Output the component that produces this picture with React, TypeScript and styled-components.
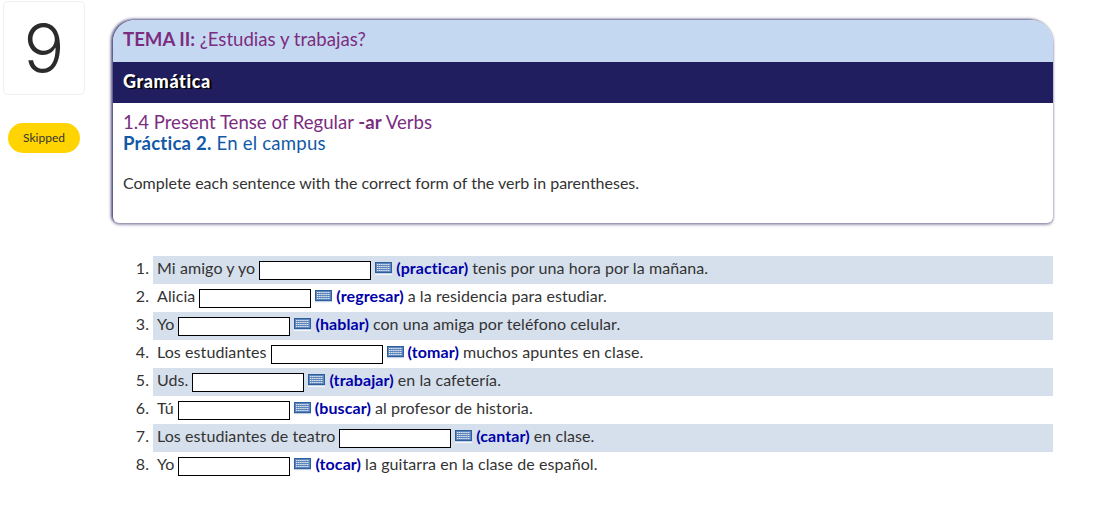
import styled, { createGlobalStyle } from "styled-components";

const GlobalStyle = createGlobalStyle`
  html, body {
    margin: 0;
    padding: 0;
    background: #fff;
    font-family: "Lato", "Open Sans", sans-serif;
    font-variant-ligatures: none;
    color: #333;
  }
`;

const Page = styled.div`
  display: flex;
  align-items: flex-start;
  width: 1119px;
  height: 511px;
  overflow: hidden;
`;

const Side = styled.div`
  width: 82px;
  margin: 1px 0 0 3px;
  display: flex;
  flex-direction: column;
  align-items: center;
`;

const NumberBox = styled.div`
  box-sizing: border-box;
  width: 82px;
  height: 94px;
  padding-bottom: 1px;
  border: 1px solid #efefef;
  border-radius: 5px;
  display: flex;
  align-items: center;
  justify-content: center;
  font-family: "Inter", sans-serif;
  font-weight: 350;
  font-size: 68px;
  line-height: 1;
  color: #2b2b2b;
`;

const Pill = styled.div`
  width: 72px;
  height: 30px;
  margin-top: 28px;
  padding-bottom: 1px;
  box-sizing: border-box;
  border-radius: 15px;
  background: #ffd400;
  display: flex;
  align-items: center;
  justify-content: center;
  font-size: 12px;
  color: #333;
`;

const Main = styled.div`
  width: 940px;
  margin: 20px 0 0 28px;
`;

const Card = styled.div`
  height: 203px;
  border-radius: 22px 22px 6px 6px;
  background: #fff;
  overflow: hidden;
  box-shadow: -2px -1px 3px rgba(32, 30, 94, 0.75), 0 2px 3px rgba(32, 30, 94, 0.4),
    1px 0 2px rgba(32, 30, 94, 0.15);
`;

const Tema = styled.div`
  height: 42px;
  box-sizing: border-box;
  padding: 9px 0 0 10px;
  background: #c5d8f1;
  color: #7b2d7f;
  font-size: 18.6px;
  line-height: 20px;
`;

const Banner = styled.div`
  height: 41px;
  box-sizing: border-box;
  padding: 8px 0 0 10px;
  background: #201e5e;
  color: #fff;
  font-size: 18px;
  line-height: 22px;
  font-weight: 900;
  letter-spacing: 0.6px;
  text-shadow: 2px 1px 1px #000;
`;

const CardBody = styled.div`
  padding: 9px 0 0 10px;
`;

const Heading = styled.div<{ $color: string; $spacing?: string }>`
  font-size: 18.6px;
  line-height: 21px;
  letter-spacing: ${(p) => p.$spacing || "0"};
  color: ${(p) => p.$color};
`;

const Directions = styled.p`
  margin: 19px 0 0;
  font-size: 16px;
  line-height: 20px;
  color: #333;
`;

const List = styled.ol`
  list-style: none;
  margin: 33px 0 0;
  padding: 0 0 0 8px;
`;

const Row = styled.li`
  display: flex;
  align-items: center;
  height: 28px;
  font-size: 16px;
  letter-spacing: 0.08px;
  white-space: pre;
`;

const Index = styled.span`
  width: 28px;
  padding: 0 4px 5px 0;
  text-align: right;
`;

const Sentence = styled.span<{ $shaded: boolean }>`
  flex: 1;
  box-sizing: border-box;
  height: 28px;
  display: flex;
  align-items: center;
  padding: 0 0 5px 4px;
  background: ${(p) => (p.$shaded ? "#d6e0ec" : "transparent")};
`;

const Blank = styled.input`
  box-sizing: border-box;
  width: 112px;
  height: 19px;
  margin: 6px 4px 0 4px;
  padding: 0;
  border: 1px solid #000;
  border-radius: 0;
  background: #fff;
`;

const KeyIcon = styled.svg`
  width: 17px;
  height: 13px;
  margin: 1px 4px 0 0;
  flex: none;
`;

const Verb = styled.b`
  margin-right: 4px;
  color: #0000a8;
  font-weight: 700;
`;

const Keyboard = () => (
  <KeyIcon viewBox="0 0 17 13">
    <rect x="0" y="0" width="17" height="13" fill="#f4f7fb" />
    <rect x="0.5" y="0.5" width="16" height="10" fill="#5f86ba" stroke="#2c5f9e" />
    <path
      d="M2 2.5h13M2 4.5h13M2 6.5h13M2 8.5h13"
      stroke="#e8eff9"
      strokeWidth="1.2"
      strokeDasharray="1.4 0.7"
    />
    <path d="M0 11.5h17" stroke="#c3d0e3" />
  </KeyIcon>
);

const rows = [
  ["Mi amigo y yo", "(practicar)", "tenis por una hora por la mañana."],
  ["Alicia", "(regresar)", "a la residencia para estudiar."],
  ["Yo", "(hablar)", "con una amiga por teléfono celular."],
  ["Los estudiantes", "(tomar)", "muchos apuntes en clase."],
  ["Uds.", "(trabajar)", "en la cafetería."],
  ["Tú", "(buscar)", "al profesor de historia."],
  ["Los estudiantes de teatro", "(cantar)", "en clase."],
  ["Yo", "(tocar)", "la guitarra en la clase de español."],
];

export default function App() {
  return (
    <Page>
      <GlobalStyle />
      <Side>
        <NumberBox>9</NumberBox>
        <Pill>Skipped</Pill>
      </Side>
      <Main>
        <Card>
          <Tema>
            <b>TEMA II:</b> ¿Estudias y trabajas?
          </Tema>
          <Banner>Gramática</Banner>
          <CardBody>
            <Heading $color="#7b2d7f">
              1.4 Present Tense of Regular <b>-ar</b> Verbs
            </Heading>
            <Heading $color="#1259a7" $spacing="0.2px">
              <b>Práctica 2.</b> En el campus
            </Heading>
            <Directions>
              Complete each sentence with the correct form of the verb in parentheses.
            </Directions>
          </CardBody>
        </Card>
        <List>
          {rows.map((r, i) => (
            <Row key={i}>
              <Index>{i + 1}.</Index>
              <Sentence $shaded={i % 2 === 0}>
                {r[0]}
                <Blank aria-label={r[1]} />
                <Keyboard />
                <Verb>{r[1]}</Verb>
                {r[2]}
              </Sentence>
            </Row>
          ))}
        </List>
      </Main>
    </Page>
  );
}
